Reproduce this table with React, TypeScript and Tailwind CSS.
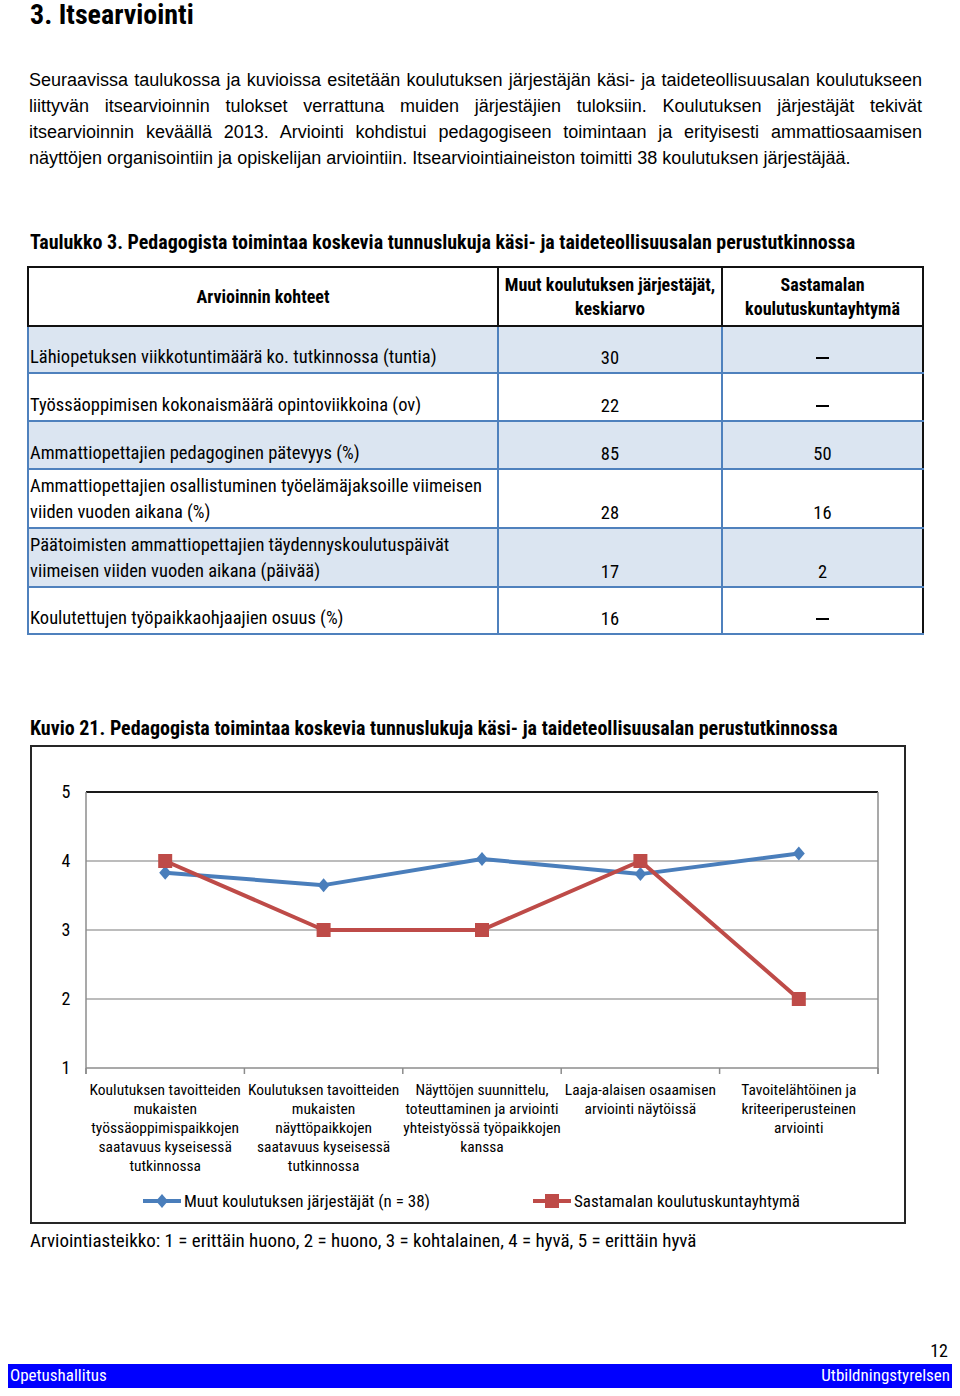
import React from "react"

const narrow = "font-['Roboto',sans-serif] [font-stretch:75%]"

const paragraph = [
    "Seuraavissa taulukossa ja kuvioissa esitetään koulutuksen järjestäjän käsi- ja taideteollisuusalan koulutukseen",
    "liittyvän itsearvioinnin tulokset verrattuna muiden järjestäjien tuloksiin. Koulutuksen järjestäjät tekivät",
    "itsearvioinnin keväällä 2013. Arviointi kohdistui pedagogiseen toimintaan ja erityisesti ammattiosaamisen",
    "näyttöjen organisointiin ja opiskelijan arviointiin. Itsearviointiaineiston toimitti 38 koulutuksen järjestäjää.",
]

type Row = { label: string[]; a: string; b: string; h: string; shaded: boolean }

const rows: Row[] = [
    { label: ["Lähiopetuksen viikkotuntimäärä ko. tutkinnossa (tuntia)"], a: "30", b: "–", h: "h-[47px]", shaded: true },
    { label: ["Työssäoppimisen kokonaismäärä opintoviikkoina (ov)"], a: "22", b: "–", h: "h-[48px]", shaded: false },
    { label: ["Ammattiopettajien pedagoginen pätevyys (%)"], a: "85", b: "50", h: "h-[48px]", shaded: true },
    { label: ["Ammattiopettajien osallistuminen työelämäjaksoille viimeisen", "viiden vuoden aikana (%)"], a: "28", b: "16", h: "h-[59px]", shaded: false },
    { label: ["Päätoimisten ammattiopettajien täydennyskoulutuspäivät", "viimeisen viiden vuoden aikana (päivää)"], a: "17", b: "2", h: "h-[59px]", shaded: true },
    { label: ["Koulutettujen työpaikkaohjaajien osuus (%)"], a: "16", b: "–", h: "h-[47px]", shaded: false },
]

const categories = [
    ["Koulutuksen tavoitteiden", "mukaisten", "työssäoppimispaikkojen", "saatavuus kyseisessä", "tutkinnossa"],
    ["Koulutuksen tavoitteiden", "mukaisten", "näyttöpaikkojen", "saatavuus kyseisessä", "tutkinnossa"],
    ["Näyttöjen suunnittelu,", "toteuttaminen ja arviointi", "yhteistyössä työpaikkojen", "kanssa"],
    ["Laaja-alaisen osaamisen", "arviointi näytöissä"],
    ["Tavoitelähtöinen ja", "kriteeriperusteinen", "arviointi"],
]

const blue = [3.83, 3.65, 4.03, 3.81, 4.11]
const red = [4, 3, 3, 4, 2]

// plot coords inside svg
const left = 54
const right = 846
const top = 45
const bottom = 321
const step = (right - left) / 5
const px = (i: number) => left + step * i + step / 2
const py = (v: number) => bottom - ((v - 1) / 4) * (bottom - top)

const Chart = () => {
    const bluePts = blue.map((v, i) => `${px(i)},${py(v)}`).join(" ")
    const redPts = red.map((v, i) => `${px(i)},${py(v)}`).join(" ")
    return (
        <svg width="873" height="330" className="block">
            {[2, 3, 4].map((v) => (
                <line key={v} x1={left} x2={right} y1={py(v)} y2={py(v)} stroke="#a6a6a6" strokeWidth="1.5" />
            ))}
            <line x1={left} x2={right} y1={top} y2={top} stroke="#1a1a1a" strokeWidth="2" />
            <line x1={left} x2={left} y1={top} y2={bottom + 6} stroke="#8c8c8c" strokeWidth="1.5" />
            <line x1={right} x2={right} y1={top} y2={bottom + 6} stroke="#8c8c8c" strokeWidth="1.5" />
            <line x1={left} x2={right} y1={bottom} y2={bottom} stroke="#8c8c8c" strokeWidth="1.5" />
            {[0, 1, 2, 3, 4, 5].map((i) => (
                <line key={i} x1={left + step * i} x2={left + step * i} y1={bottom} y2={bottom + 6} stroke="#8c8c8c" strokeWidth="1.5" />
            ))}
            {[1, 2, 3, 4, 5].map((v) => (
                <text key={v} x="34" y={py(v) + 6} textAnchor="middle" fontSize="18" fill="#000" fontFamily="Roboto, sans-serif" style={{ fontStretch: "75%" }}>
                    {v}
                </text>
            ))}
            <polyline points={bluePts} fill="none" stroke="#4a7ebb" strokeWidth="4" strokeLinejoin="round" />
            {blue.map((v, i) => (
                <polygon key={i} points={`${px(i)},${py(v) - 7} ${px(i) + 6},${py(v)} ${px(i)},${py(v) + 7} ${px(i) - 6},${py(v)}`} fill="#4a7ebb" />
            ))}
            <polyline points={redPts} fill="none" stroke="#be4b48" strokeWidth="4" strokeLinejoin="round" />
            {red.map((v, i) => (
                <rect key={i} x={px(i) - 7} y={py(v) - 7} width="14" height="14" fill="#be4b48" />
            ))}
        </svg>
    )
}

const LegendMark = ({ color, square }: { color: string; square: boolean }) => (
    <svg width="38" height="14" className="block">
        <line x1="0" x2="38" y1="7" y2="7" stroke={color} strokeWidth="4" />
        {square ? <rect x="12" y="0" width="14" height="14" fill={color} /> : <polygon points="19,0 25,7 19,14 13,7" fill={color} />}
    </svg>
)

const App = () => {
    return (
        <div className="relative w-[960px] h-[1396px] bg-white text-black font-['Liberation_Sans',Arial,sans-serif]">
            <h1 className={`${narrow} pl-[30px] pt-[2px] text-[28px] leading-[26px] font-bold`}>3. Itsearviointi</h1>

            <div className="mt-[39px] ml-[29px] w-[893px] text-[18px] leading-[26px]">
                {paragraph.map((line, i) => (
                    <p key={i} className={i < paragraph.length - 1 ? "text-justify [text-align-last:justify] whitespace-nowrap" : ""}>
                        {line}
                    </p>
                ))}
            </div>

            <p className={`${narrow} mt-[59px] ml-[30px] text-[20px] leading-[24px] font-bold`}>
                Taulukko 3. Pedagogista toimintaa koskevia tunnuslukuja käsi- ja taideteollisuusalan perustutkinnossa
            </p>

            <table className={`${narrow} mt-[12px] ml-[27px] w-[897px] border-collapse text-[18.5px]`}>
                <thead>
                    <tr className="h-[59px] text-[18px] leading-[24px]">
                        <th className="w-[470px] border-2 border-[#111] text-center align-middle font-bold">Arvioinnin kohteet</th>
                        <th className="w-[224px] border-2 border-[#111] text-center align-middle font-bold">
                            Muut koulutuksen järjestäjät,
                            <br />
                            keskiarvo
                        </th>
                        <th className="border-2 border-[#111] text-center align-middle font-bold">
                            Sastamalan
                            <br />
                            koulutuskuntayhtymä
                        </th>
                    </tr>
                </thead>
                <tbody>
                    {rows.map((r, i) => (
                        <tr key={i} className={`${r.h} ${r.shaded ? "bg-[#dbe5f1]" : "bg-white"} leading-[26px]`}>
                            <td className="border-2 border-[#4f81bd] pl-[1px] pb-[2px] align-bottom whitespace-nowrap">
                                {r.label.map((l, j) => (
                                    <div key={j}>{l}</div>
                                ))}
                            </td>
                            <td className="border-2 border-[#4f81bd] pb-[1px] align-bottom text-center">{r.a}</td>
                            <td className="border-2 border-[#4f81bd] border-r-[#111] pb-[1px] align-bottom text-center">
                                {r.b === "–" ? <span className="inline-block w-[13px] h-[2px] bg-black align-middle mb-[2px]" /> : r.b}
                            </td>
                        </tr>
                    ))}
                </tbody>
            </table>

            <p className={`${narrow} mt-[81px] ml-[30px] text-[20px] leading-[24px] font-bold`}>
                Kuvio 21. Pedagogista toimintaa koskevia tunnuslukuja käsi- ja taideteollisuusalan perustutkinnossa
            </p>

            <div className={`${narrow} mt-[5px] ml-[30px] w-[876px] h-[479px] border-2 border-[#262626]`}>
                <Chart />
                <div className="ml-[54px] w-[792px] grid grid-cols-5 text-[15.5px] leading-[19px] text-center mt-[4px]">
                    {categories.map((c, i) => (
                        <div key={i}>
                            {c.map((l, j) => (
                                <div key={j} className="whitespace-nowrap">{l}</div>
                            ))}
                        </div>
                    ))}
                </div>
                <div className="mt-[14px] flex items-center text-[17px] leading-[22px]">
                    <div className="ml-[111px] flex items-center gap-[3px]">
                        <LegendMark color="#4a7ebb" square={false} />
                        <span>Muut koulutuksen järjestäjät (n = 38)</span>
                    </div>
                    <div className="ml-[103px] flex items-center gap-[3px]">
                        <LegendMark color="#be4b48" square={true} />
                        <span>Sastamalan koulutuskuntayhtymä</span>
                    </div>
                </div>
            </div>

            <p className={`${narrow} mt-[5px] ml-[30px] text-[19px] leading-[24px]`}>
                Arviointiasteikko: 1 = erittäin huono, 2 = huono, 3 = kohtalainen, 4 = hyvä, 5 = erittäin hyvä
            </p>

            <div className="absolute left-0 right-0 top-[1339px]">
                <div className={`${narrow} pr-[12px] text-right text-[18px] leading-[24px]`}>12</div>
                <div className={`${narrow} mx-[8px] mt-[1px] h-[24px] bg-[#0000ff] text-white flex items-center justify-between px-[2px] text-[17px]`}>
                    <span>Opetushallitus</span>
                    <span>Utbildningstyrelsen</span>
                </div>
            </div>
        </div>
    )
}

export default App
